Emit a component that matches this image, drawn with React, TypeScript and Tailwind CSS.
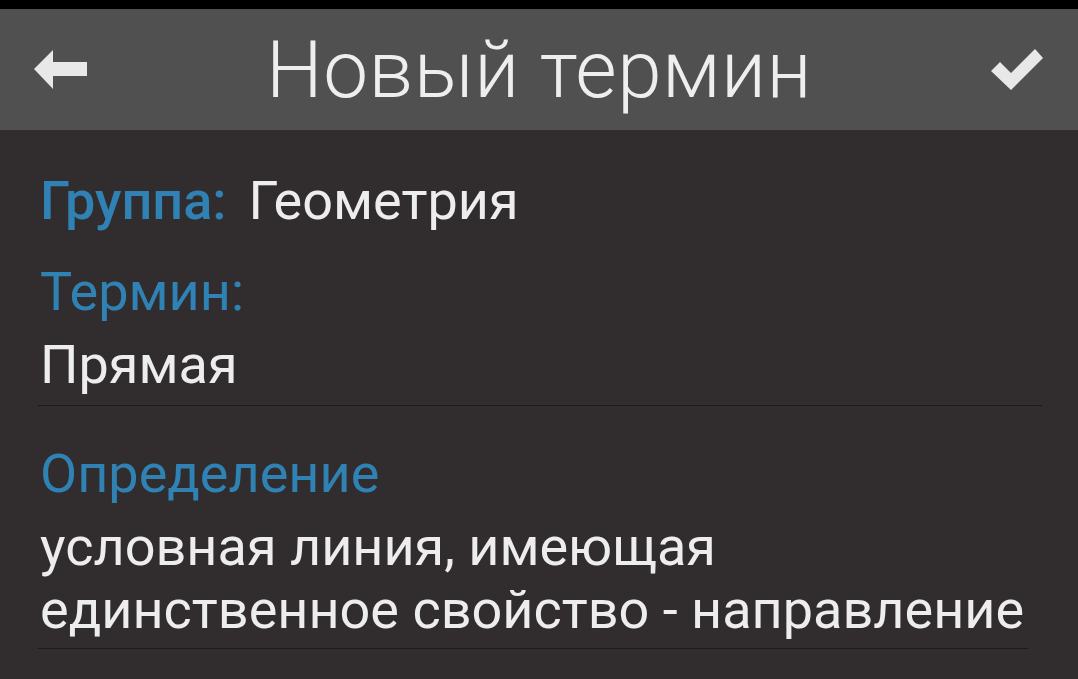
const roboto = { fontFamily: 'Roboto, "Noto Sans", sans-serif' };

export default function App() {
  return (
    <div className="w-[1078px] h-[679px] overflow-hidden bg-[#312d2e]" style={roboto}>
      <div className="h-[9px] bg-black" />
      <header className="h-[121px] bg-[#505050] flex items-center justify-between px-[34px]">
        <svg width="54" height="40" viewBox="0 0 54 40" className="shrink-0">
          <polygon points="0,19 19,0 19,12 53,12 53,26 19,26 19,39" fill="#e8e8e8" />
        </svg>
        <h1 className="text-[80px] font-light leading-none text-[#eeeeee] tracking-[0.5px]">Новый термин</h1>
        <svg width="54" height="42" viewBox="992 50 54 42" className="shrink-0">
          <polygon points="993,72 1002,63 1013,74 1037,50 1045,59 1013,91" fill="#e8e8e8" />
        </svg>
      </header>

      <main className="px-[38px] pt-[39px] text-[54px] leading-[63px]">
        <div className="pl-[2px] flex items-baseline gap-[22px]">
          <span className="font-medium text-[#2f82b3]">Группа:</span>
          <span className="text-[#ededed]">Геометрия</span>
        </div>

        <div className="pl-[2px] mt-[28px] text-[#2f82b3]">Термин:</div>
        <div className="pl-[2px] mt-[10px] text-[#ededed]">Прямая</div>
        <div className="mt-[9px] w-[1004px] h-[1px] bg-[#1c1a1b]" />

        <div className="pl-[2px] mt-[36px] text-[#2f82b3]">Определение</div>
        <p className="pl-[2px] mt-[10px] text-[#ededed] w-[1002px]">
          условная линия, имеющая единственное свойство - направление
        </p>
        <div className="mt-[7px] w-[990px] h-[1px] bg-[#1c1a1b]" />
      </main>
    </div>
  );
}
